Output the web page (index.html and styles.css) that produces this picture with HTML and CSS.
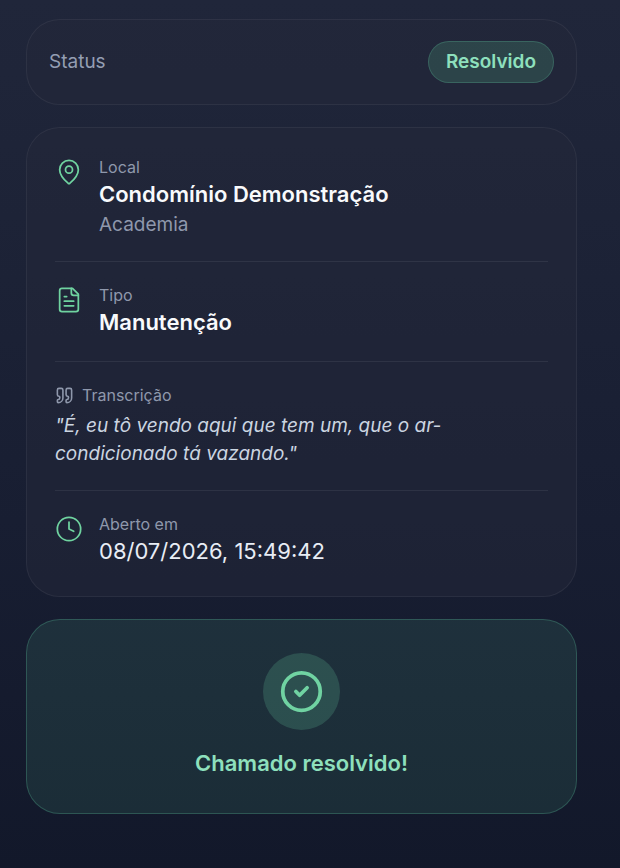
FILE: index.html
```html
<!DOCTYPE html>
<html lang="pt-BR">
<head>
    <meta charset="UTF-8">
    <meta name="viewport" content="width=device-width, initial-scale=1.0">
    <title>Chamado</title>
    <link rel="stylesheet" href="styles.css">
</head>
<body>
    <main class="page">
        <section class="card status-card">
            <span class="status-label">Status</span>
            <span class="badge">Resolvido</span>
        </section>

        <section class="card details">
            <div class="row">
                <svg class="icon" viewBox="0 0 24 24" aria-hidden="true">
                    <path d="M20 10c0 4.993-5.539 10.193-7.399 11.799a1 1 0 0 1-1.202 0C9.539 20.193 4 14.993 4 10a8 8 0 0 1 16 0"/>
                    <circle cx="12" cy="10" r="3"/>
                </svg>
                <div class="row-text">
                    <p class="label">Local</p>
                    <p class="title">Condomínio Demonstração</p>
                    <p class="subtitle">Academia</p>
                </div>
            </div>

            <div class="row">
                <svg class="icon" viewBox="0 0 24 24" aria-hidden="true">
                    <path d="M15 2H6a2 2 0 0 0-2 2v16a2 2 0 0 0 2 2h12a2 2 0 0 0 2-2V7Z"/>
                    <path d="M14 2v4a2 2 0 0 0 2 2h4"/>
                    <path d="M10 9H8"/>
                    <path d="M16 13H8"/>
                    <path d="M16 17H8"/>
                </svg>
                <div class="row-text">
                    <p class="label">Tipo</p>
                    <p class="title">Manutenção</p>
                </div>
            </div>

            <div class="row row-stacked">
                <p class="label label-icon">
                    <svg class="icon-quote" viewBox="0 0 24 24" aria-hidden="true">
                        <path d="M16 3a2 2 0 0 0-2 2v6a2 2 0 0 0 2 2 1 1 0 0 1 1 1v1a2 2 0 0 1-2 2 1 1 0 0 0-1 1v2a1 1 0 0 0 1 1 6 6 0 0 0 6-6V5a2 2 0 0 0-2-2z"/>
                        <path d="M5 3a2 2 0 0 0-2 2v6a2 2 0 0 0 2 2 1 1 0 0 1 1 1v1a2 2 0 0 1-2 2 1 1 0 0 0-1 1v2a1 1 0 0 0 1 1 6 6 0 0 0 6-6V5a2 2 0 0 0-2-2z"/>
                    </svg>
                    Transcrição
                </p>
                <p class="quote">"É, eu tô vendo aqui que tem um, que o ar-condicionado tá vazando."</p>
            </div>

            <div class="row">
                <svg class="icon" viewBox="0 0 24 24" aria-hidden="true">
                    <circle cx="12" cy="12" r="10"/>
                    <path d="M12 6v6l4 2"/>
                </svg>
                <div class="row-text">
                    <p class="label">Aberto em</p>
                    <p class="value">08/07/2026, 15:49:42</p>
                </div>
            </div>
        </section>

        <section class="card success">
            <div class="success-icon">
                <svg viewBox="0 0 24 24" aria-hidden="true">
                    <circle cx="12" cy="12" r="10"/>
                    <path d="m9 12 2 2 4-4"/>
                </svg>
            </div>
            <p class="success-text">Chamado resolvido!</p>
        </section>
    </main>
</body>
</html>
```

FILE: styles.css
```css
* {
    box-sizing: border-box;
}
body {
    margin: 0;
    min-height: 100vh;
    font-family: Inter, "Liberation Sans", sans-serif;
    color: #f8fafc;
    background: linear-gradient(to bottom, #20263a 0%, #1d2337 25%, #181e32 60%, #12182a 100%);
}
p {
    margin: 0;
}
.page {
    display: flex;
    flex-direction: column;
    gap: 22px;
    padding: 19px 43px 54px 26px;
}
.card {
    border: 1px solid rgba(255, 255, 255, 0.06);
    border-radius: 34px;
    background: rgba(36, 40, 58, 0.5);
}

/* Status */
.status-card {
    display: flex;
    align-items: center;
    justify-content: space-between;
    padding: 21px 22px;
}
.status-label {
    font-size: 19px;
    line-height: 28px;
    color: #949eb3;
}
.badge {
    padding: 6px 17px;
    border: 1px solid rgba(110, 231, 183, 0.2);
    border-radius: 21px;
    background: rgba(90, 190, 140, 0.2);
    color: #8ee0bd;
    font-size: 19px;
    font-weight: 600;
    line-height: 28px;
}

/* Details */
.details {
    padding: 28px;
}
.row {
    display: flex;
    gap: 16px;
    padding: 22px 0;
    border-bottom: 1px solid rgba(255, 255, 255, 0.07);
}
.row:first-child {
    padding-top: 0;
}
.row:last-child {
    padding-bottom: 0;
    border-bottom: none;
}
.row-stacked {
    flex-direction: column;
    gap: 6px;
}
.icon {
    flex: none;
    width: 28px;
    height: 28px;
    margin-top: 2px;
    fill: none;
    stroke: #6fd3a0;
    stroke-width: 1.5;
    stroke-linecap: round;
    stroke-linejoin: round;
}
.icon-quote {
    width: 19px;
    height: 19px;
    fill: none;
    stroke: #8f98ac;
    stroke-width: 2;
    stroke-linecap: round;
    stroke-linejoin: round;
}
.label {
    font-size: 16px;
    line-height: 22px;
    color: #8f98ac;
}
.label-icon {
    display: flex;
    align-items: center;
    gap: 8px;
}
.title {
    font-size: 22px;
    font-weight: 600;
    line-height: 33px;
}
.subtitle {
    font-size: 19px;
    line-height: 28px;
    color: #8f98ac;
}
.quote {
    font-size: 19px;
    font-style: italic;
    line-height: 28px;
    color: #cbd5e1;
}
.value {
    font-size: 22px;
    line-height: 33px;
    color: #e8edf5;
}

/* Resolved message */
.success {
    display: flex;
    flex-direction: column;
    align-items: center;
    gap: 17px;
    padding: 33px;
    border-color: rgba(110, 231, 183, 0.22);
    background: rgba(90, 200, 145, 0.12);
}
.success-icon {
    display: flex;
    align-items: center;
    justify-content: center;
    width: 77px;
    height: 77px;
    border-radius: 50%;
    background: rgba(110, 220, 170, 0.19);
}
.success-icon svg {
    width: 45px;
    height: 45px;
    fill: none;
    stroke: #70d3a2;
    stroke-width: 2;
    stroke-linecap: round;
    stroke-linejoin: round;
}
.success-text {
    color: #8ee0bd;
    font-size: 22px;
    font-weight: 600;
    line-height: 33px;
    text-align: center;
}
```
